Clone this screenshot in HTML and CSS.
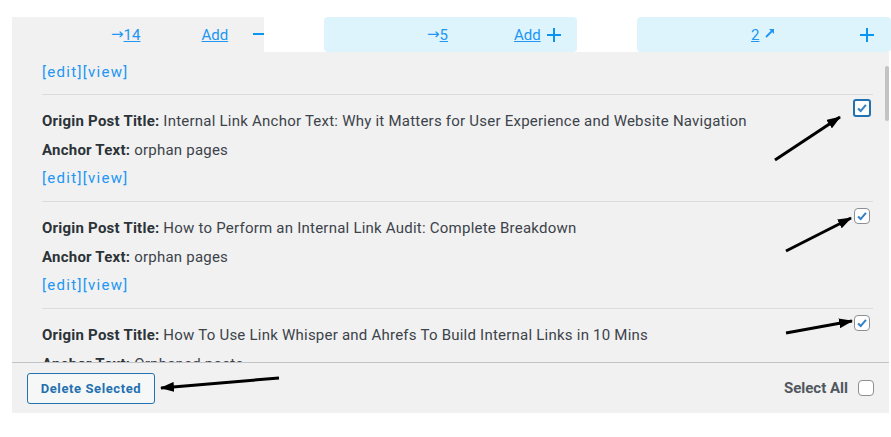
FILE: index.html
```html
<!DOCTYPE html>
<html lang="en">
<head>
  <meta charset="UTF-8">
  <title>Inbound Links</title>
  <link rel="stylesheet" href="styles.css">
</head>
<body>
  <div class="columns">
    <div class="col-head col-head--open">
      <span class="count"><span class="arrow">&rarr;</span><a href="#">14</a></span>
      <a class="add" href="#">Add</a>
      <span class="icon-minus"></span>
    </div>
    <div class="col-head col-head--second">
      <span class="count"><span class="arrow">&rarr;</span><a href="#">5</a></span>
      <a class="add" href="#">Add</a>
      <svg class="icon-plus" width="14" height="14" viewBox="0 0 14 14"><rect x="6" y="0" width="2" height="14"/><rect x="0" y="6" width="14" height="2"/></svg>
    </div>
    <div class="col-head col-head--third">
      <span class="count"><a href="#">2</a></span>
      <svg class="icon-out" width="10" height="10" viewBox="0 0 10 10"><path d="M1 9 L7 3" stroke="#2196f3" stroke-width="1.8"/><path d="M4 1 L9 1 L9 6 Z" fill="#2196f3"/></svg>
      <svg class="icon-plus" width="14" height="14" viewBox="0 0 14 14"><rect x="6" y="0" width="2" height="14"/><rect x="0" y="6" width="14" height="2"/></svg>
    </div>
  </div>

  <div class="panel">
    <div class="list">
      <div class="item item--tail">
        <p class="actions"><a href="#">[edit]</a><a href="#">[view]</a></p>
      </div>

      <div class="item">
        <div class="item-body">
          <p><b>Origin Post Title:</b> Internal Link Anchor Text: Why it Matters for User Experience and Website Navigation</p>
          <p><b>Anchor Text:</b> orphan pages</p>
          <p class="actions"><a href="#">[edit]</a><a href="#">[view]</a></p>
        </div>
        <span class="check check--focus">
          <svg width="14" height="14" viewBox="0 0 16 16"><path d="M3.5 8.5 L6.5 11.5 L12.5 4.5" fill="none" stroke="#3582c4" stroke-width="2.4"/></svg>
        </span>
      </div>

      <div class="item">
        <div class="item-body">
          <p><b>Origin Post Title:</b> How to Perform an Internal Link Audit: Complete Breakdown</p>
          <p><b>Anchor Text:</b> orphan pages</p>
          <p class="actions"><a href="#">[edit]</a><a href="#">[view]</a></p>
        </div>
        <span class="check">
          <svg width="14" height="14" viewBox="0 0 16 16"><path d="M3.5 8.5 L6.5 11.5 L12.5 4.5" fill="none" stroke="#3582c4" stroke-width="2.4"/></svg>
        </span>
      </div>

      <div class="item">
        <div class="item-body">
          <p><b>Origin Post Title:</b> How To Use Link Whisper and Ahrefs To Build Internal Links in 10 Mins</p>
          <p><b>Anchor Text:</b> Orphaned posts</p>
          <p class="actions"><a href="#">[edit]</a><a href="#">[view]</a></p>
        </div>
        <span class="check">
          <svg width="14" height="14" viewBox="0 0 16 16"><path d="M3.5 8.5 L6.5 11.5 L12.5 4.5" fill="none" stroke="#3582c4" stroke-width="2.4"/></svg>
        </span>
      </div>
    </div>
    <div class="scroll-thumb"></div>

    <div class="footer">
      <button class="btn" type="button">Delete Selected</button>
      <label class="select-all">Select All <span class="check check--empty"></span></label>
    </div>
  </div>

  <svg class="notes" width="891" height="437" viewBox="0 0 891 437">
    <defs>
      <marker id="head" markerWidth="14" markerHeight="10" refX="13" refY="5" orient="auto" markerUnits="userSpaceOnUse">
        <path d="M0 0 L14 5 L0 10 Z" fill="#000"/>
      </marker>
    </defs>
    <line x1="775" y1="160" x2="840" y2="117" stroke="#000" stroke-width="3" marker-end="url(#head)"/>
    <line x1="786" y1="251" x2="851" y2="218" stroke="#000" stroke-width="3" marker-end="url(#head)"/>
    <line x1="786" y1="333" x2="852" y2="321" stroke="#000" stroke-width="3" marker-end="url(#head)"/>
    <line x1="279" y1="378" x2="161" y2="388" stroke="#000" stroke-width="3" marker-end="url(#head)"/>
  </svg>
</body>
</html>
```

FILE: styles.css
```css
body {
  margin: 0;
  font-family: Roboto, "Noto Sans", sans-serif;
  font-size: 15px;
  color: #3c434a;
  background: #fff;
  position: relative;
}
a {
  color: #2196f3;
}
.columns {
  display: grid;
  grid-template-columns: 252px 253px 254px;
  column-gap: 60px;
  margin: 17px 0 0 12px;
}
.col-head {
  height: 35px;
  display: flex;
  align-items: center;
  background-color: #ddf4fd;
  border-radius: 4px;
}
.col-head--open {
  background-color: #f1f1f1;
  border-radius: 0;
  padding-left: 99px;
}
.col-head--second {
  padding-left: 103px;
}
.col-head--third {
  padding-left: 114px;
}
.count {
  display: flex;
  align-items: center;
}
.arrow {
  font-family: "DejaVu Sans", sans-serif;
  font-size: 15px;
  color: #2196f3;
  margin-top: -2px;
}
.add {
  margin-left: 61px;
}
.col-head--second .add {
  margin-left: 66px;
}
.icon-minus {
  width: 14px;
  height: 2px;
  background-color: #0b95f2;
  margin-left: 25px;
  position: relative;
  top: -1px;
}
.icon-plus {
  fill: #0b95f2;
  margin-left: 6px;
}
.col-head--third .icon-plus {
  margin-left: 85px;
}
.icon-out {
  margin-left: 6px;
  margin-top: -4px;
}

.panel {
  position: relative;
  margin-left: 12px;
  width: 877px;
  background-color: #f1f1f1;
}
.list {
  height: 310px;
  overflow: hidden;
  padding: 0 16px 0 30px;
}
.item {
  display: flex;
  align-items: flex-start;
  border-top: 1px solid #dcdcde;
  padding: 12px 0 10px;
}
.item p {
  margin: 0;
  line-height: 28px;
  letter-spacing: 0.23px;
}
.item p:nth-child(2) {
  line-height: 30px;
}
.item b {
  color: #2c3338;
}
.item-body {
  flex: 1;
}
.item--tail {
  border-top: none;
  padding: 7px 0 9px;
}
.item .actions {
  letter-spacing: 1.3px;
  line-height: 26px;
}
.actions a {
  text-decoration: none;
}
.check {
  box-sizing: border-box;
  width: 16px;
  height: 16px;
  margin: -6px 3px 0 0;
  border: 1px solid #8c8f94;
  border-radius: 4px;
  background-color: #fff;
  display: flex;
  align-items: center;
  justify-content: center;
}
.check--focus {
  width: 18px;
  height: 18px;
  margin: -8px 2px 0 0;
  border: 2px solid #2271b1;
  border-radius: 3px;
}
.scroll-thumb {
  position: absolute;
  top: 14px;
  right: 0;
  width: 4px;
  height: 55px;
  border-radius: 2px;
  background-color: #c3c3c3;
}
.footer {
  display: flex;
  align-items: center;
  justify-content: space-between;
  height: 50px;
  padding: 0 15px;
  border-top: 1px solid #c3c4c7;
}
.btn {
  height: 31px;
  width: 128px;
  padding: 0;
  font-family: Roboto, sans-serif;
  font-size: 13px;
  font-weight: bold;
  letter-spacing: 0.6px;
  color: #2271b1;
  background-color: #f6f7f7;
  border: 1px solid #2271b1;
  border-radius: 3px;
  cursor: pointer;
  margin-top: 1px;
}
.select-all {
  display: flex;
  align-items: center;
  gap: 10px;
  font-weight: bold;
  color: #50575e;
}
.select-all .check {
  margin: 0;
}
.notes {
  position: absolute;
  top: 0;
  left: 0;
  pointer-events: none;
}
```
